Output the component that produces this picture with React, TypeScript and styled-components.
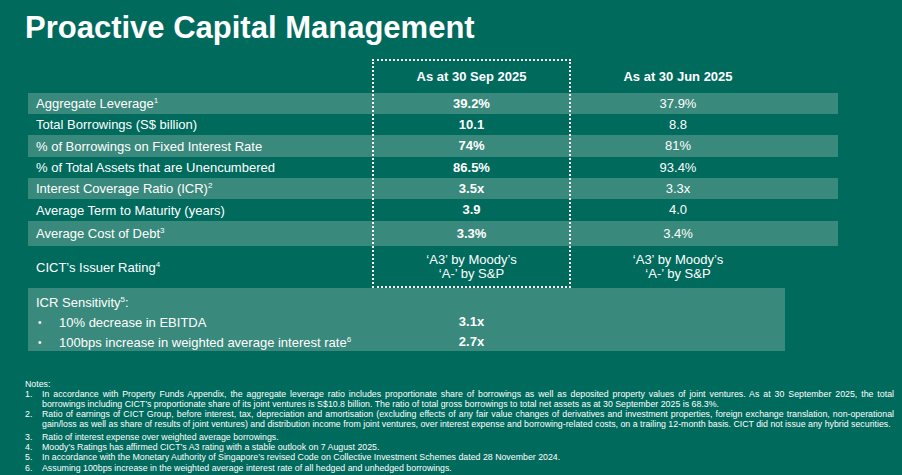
import React from "react";
import styled, { createGlobalStyle, css } from "styled-components";

const BG = "#006a5d";
const BAND = "#3a897d";
const COLS = "344px 199px 214px 53px";

const GlobalStyle = createGlobalStyle`
    html, body {
        margin: 0;
        padding: 0;
        background: ${BG};
    }
    body {
        font-family: "Liberation Sans", Arial, sans-serif;
        color: #ffffff;
    }
`;

const Slide = styled.div`
    width: 902px;
    height: 475px;
    box-sizing: border-box;
    padding: 12px 8px 0 25px;
    background: ${BG};
    overflow: hidden;
    display: flex;
    flex-direction: column;
`;

const Title = styled.h1`
    margin: 0;
    font-size: 31px;
    line-height: 31px;
    font-weight: 700;
`;

const Table = styled.div`
    margin: 16px 0 0 3px;
    display: grid;
    grid-template-columns: ${COLS};
    font-size: 13px;
`;

const Row = styled.div<{ $row: number; $h: number; $light?: boolean }>`
    grid-column: 1 / -1;
    grid-row: ${({ $row }) => $row};
    display: grid;
    grid-template-columns: ${COLS};
    align-items: center;
    height: ${({ $h }) => $h}px;
    background: ${({ $light }) => ($light ? BAND : "transparent")};
`;

const Label = styled.div`
    padding-left: 8px;
    white-space: nowrap;
`;

const Value = styled.div<{ $bold?: boolean }>`
    text-align: center;
    line-height: 14px;
    ${({ $bold }) => $bold && css`
        font-weight: 700;
    `}
`;

const HeadCell = styled.div`
    text-align: center;
    font-weight: 700;
`;

const Frame = styled.div`
    grid-column: 2;
    grid-row: 1 / 10;
    border: 2px dotted #ffffff;
    z-index: 1;
    pointer-events: none;
`;

const Sup = styled.span`
    position: relative;
    top: -5px;
    font-size: 8px;
    line-height: 0;
`;

const Sensitivity = styled.div`
    margin-left: 3px;
    width: 757px;
    height: 63px;
    box-sizing: border-box;
    padding-top: 4px;
    background: ${BAND};
    font-size: 13px;
`;

const SensLine = styled.div`
    display: grid;
    grid-template-columns: 344px 199px;
    align-items: center;
    height: 20px;
`;

const SensLabel = styled.div`
    padding-left: 8px;
    white-space: nowrap;
`;

const Bullet = styled.span`
    display: inline-block;
    width: 23px;
    padding-left: 2px;
    box-sizing: border-box;
    font-size: 10px;
    vertical-align: 1px;
`;

const Notes = styled.div`
    margin-top: 29px;
    font-size: 8.8px;
    line-height: 9.4px;
`;

const NoteItem = styled.div<{ $gap: number }>`
    display: grid;
    grid-template-columns: 17px 1fr;
    margin-top: ${({ $gap }) => $gap}px;
`;

const NoteLine = styled.div<{ $last?: boolean }>`
    ${({ $last }) => $last
        ? css`
            white-space: nowrap;
        `
        : css`
            text-align: justify;
            text-align-last: justify;
        `}
`;

type Metric = {
    label: string;
    sup?: string;
    cur: React.ReactNode;
    prev: React.ReactNode;
    h: number;
    light?: boolean;
    plain?: boolean;
};

const rating = <>‘A3’ by Moody’s<br />‘A-’ by S&amp;P</>;

const metrics: Metric[] = [
    { label: "Aggregate Leverage", sup: "1", cur: "39.2%", prev: "37.9%", h: 21, light: true },
    { label: "Total Borrowings (S$ billion)", cur: "10.1", prev: "8.8", h: 21 },
    { label: "% of Borrowings on Fixed Interest Rate", cur: "74%", prev: "81%", h: 22, light: true },
    { label: "% of Total Assets that are Unencumbered", cur: "86.5%", prev: "93.4%", h: 21 },
    { label: "Interest Coverage Ratio (ICR)", sup: "2", cur: "3.5x", prev: "3.3x", h: 21, light: true },
    { label: "Average Term to Maturity (years)", cur: "3.9", prev: "4.0", h: 22 },
    { label: "Average Cost of Debt", sup: "3", cur: "3.3%", prev: "3.4%", h: 25, light: true },
    { label: "CICT’s Issuer Rating", sup: "4", cur: rating, prev: rating, h: 42, plain: true },
];

const notes: { gap: number; lines: string[] }[] = [
    {
        gap: 1,
        lines: [
            "In accordance with Property Funds Appendix, the aggregate leverage ratio includes proportionate share of borrowings as well as deposited property values of joint ventures. As at 30 September 2025, the total",
            "borrowings including CICT’s proportionate share of its joint ventures is S$10.8 billion. The ratio of total gross borrowings to total net assets as at 30 September 2025 is 68.3%.",
        ],
    },
    {
        gap: 1,
        lines: [
            "Ratio of earnings of CICT Group, before interest, tax, depreciation and amortisation (excluding effects of any fair value changes of derivatives and investment properties, foreign exchange translation, non-operational",
            "gain/loss as well as share of results of joint ventures) and distribution income from joint ventures, over interest expense and borrowing-related costs, on a trailing 12-month basis. CICT did not issue any hybrid securities.",
        ],
    },
    { gap: 3.5, lines: ["Ratio of interest expense over weighted average borrowings."] },
    { gap: 1, lines: ["Moody’s Ratings has affirmed CICT’s A3 rating with a stable outlook on 7 August 2025."] },
    { gap: 1, lines: ["In accordance with the Monetary Authority of Singapore’s revised Code on Collective Investment Schemes dated 28 November 2024."] },
    { gap: 1, lines: ["Assuming 100bps increase in the weighted average interest rate of all hedged and unhedged borrowings."] },
];

const App = () => {
    return (
        <>
            <GlobalStyle />
            <Slide>
                <Title>Proactive Capital Management</Title>
                <Table>
                    <Row $row={1} $h={34}>
                        <div />
                        <HeadCell>As at 30 Sep 2025</HeadCell>
                        <HeadCell>As at 30 Jun 2025</HeadCell>
                    </Row>
                    {metrics.map((m, idx) => (
                        <Row key={m.label} $row={idx + 2} $h={m.h} $light={m.light}>
                            <Label>
                                {m.label}
                                {m.sup && <Sup>{m.sup}</Sup>}
                            </Label>
                            <Value $bold={!m.plain}>{m.cur}</Value>
                            <Value>{m.prev}</Value>
                        </Row>
                    ))}
                    <Frame />
                </Table>
                <Sensitivity>
                    <SensLine>
                        <SensLabel>
                            ICR Sensitivity<Sup>5</Sup>:
                        </SensLabel>
                    </SensLine>
                    <SensLine>
                        <SensLabel>
                            <Bullet>•</Bullet>
                            10% decrease in EBITDA
                        </SensLabel>
                        <Value $bold>3.1x</Value>
                    </SensLine>
                    <SensLine>
                        <SensLabel>
                            <Bullet>•</Bullet>
                            100bps increase in weighted average interest rate<Sup>6</Sup>
                        </SensLabel>
                        <Value $bold>2.7x</Value>
                    </SensLine>
                </Sensitivity>
                <Notes>
                    <div>Notes:</div>
                    {notes.map((n, idx) => (
                        <NoteItem key={idx} $gap={n.gap}>
                            <span>{idx + 1}.</span>
                            <div>
                                {n.lines.map((line, lineIdx) => (
                                    <NoteLine key={lineIdx} $last={lineIdx === n.lines.length - 1}>
                                        {line}
                                    </NoteLine>
                                ))}
                            </div>
                        </NoteItem>
                    ))}
                </Notes>
            </Slide>
        </>
    );
};

export default App;
